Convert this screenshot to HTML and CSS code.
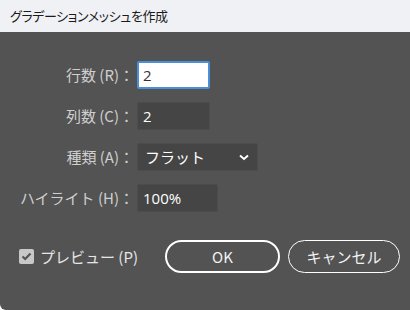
FILE: index.html
```html
<!DOCTYPE html>
<html lang="ja">
<head>
<meta charset="utf-8">
<link rel="stylesheet" href="styles.css">
</head>
<body>
<div class="dialog">
  <div class="titlebar">グラデーションメッシュを作成</div>
  <div class="content">
    <div class="form">
      <label class="lbl">行数 (R)：</label>
      <div class="field"><div class="input active w73">2</div></div>
      <label class="lbl">列数 (C)：</label>
      <div class="field"><div class="input w73">2</div></div>
      <label class="lbl">種類 (A)：</label>
      <div class="field"><div class="input select w121"><span>フラット</span>
        <svg width="10" height="7" viewBox="0 0 10 7"><path d="M1 1.5 L5 5 L9 1.5" fill="none" stroke="#fff" stroke-width="2"/></svg></div></div>
      <label class="lbl">ハイライト (H)：</label>
      <div class="field"><div class="input w81">100%</div></div>
    </div>
    <div class="footer">
      <div class="check">
        <span class="box"><svg width="11" height="9" viewBox="0 0 11 9"><path d="M1.5 4.5 L4.2 7 L9.5 1.5" fill="none" stroke="#555" stroke-width="2.2"/></svg></span>
        <span class="checklbl">プレビュー (P)</span>
      </div>
      <div class="buttons">
        <button class="btn ok">OK</button>
        <button class="btn cancel">キャンセル</button>
      </div>
    </div>
  </div>
</div>
</body>
</html>
```
FILE: styles.css
```css
html, body {
  margin: 0;
  padding: 0;
  background: #ffffff;
}
body {
  width: 410px;
  height: 310px;
  overflow: hidden;
  font-family: "Noto Sans CJK JP", "Noto Sans", sans-serif;
}
.dialog {
  width: 410px;
  height: 310px;
  background: #535353;
  border-bottom-left-radius: 6px;
  overflow: hidden;
  display: flex;
  flex-direction: column;
}
.titlebar {
  height: 32px;
  background: #f0f1f5;
  color: #1b1b1b;
  font-size: 13px;
  letter-spacing: -0.4px;
  font-feature-settings: "palt";
  line-height: 32px;
  padding-left: 10px;
  box-sizing: border-box;
}
.content {
  padding-top: 29px;
}
.form {
  display: grid;
  grid-template-columns: 134px auto;
  column-gap: 3px;
  row-gap: 13px;
  align-items: center;
}
.lbl {
  text-align: right;
  color: #cfcfcf;
  font-size: 15px;
  line-height: 28px;
  white-space: nowrap;
}
.field {
  display: flex;
}
.input {
  height: 28px;
  box-sizing: border-box;
  background: #454545;
  border: 1px solid #4c4c4c;
  border-radius: 2px;
  color: #ffffff;
  font-family: "Open Sans", "Noto Sans CJK JP", sans-serif;
  font-size: 15px;
  line-height: 26px;
  padding-left: 5px;
}
.input.active {
  background: #ffffff;
  border: 2px solid #4a90d9;
  color: #333333;
  line-height: 24px;
  padding-left: 4px;
}
.w73 { width: 73px; }
.w81 { width: 81px; }
.w121 { width: 121px; }
.select {
  display: flex;
  align-items: center;
  justify-content: space-between;
  padding-right: 8px;
  font-family: "Noto Sans CJK JP", sans-serif;
  font-size: 15px;
  padding-left: 7px;
}
.footer {
  margin-top: 28px;
  display: flex;
  align-items: center;
  padding-left: 19px;
  padding-right: 10px;
}
.check {
  display: flex;
  align-items: center;
  gap: 6px;
}
.box {
  width: 15px;
  height: 15px;
  background: #c8c8c8;
  border-radius: 2px;
  display: flex;
  align-items: center;
  justify-content: center;
}
.checklbl {
  color: #e6e6e6;
  font-size: 15px;
}
.buttons {
  display: flex;
  gap: 8px;
  margin-left: auto;
}
.btn {
  height: 33px;
  box-sizing: border-box;
  background: transparent;
  border: 2px solid #ffffff;
  border-radius: 17px;
  color: #f2f2f2;
  font-family: "Noto Sans CJK JP", "Noto Sans", sans-serif;
  font-size: 15px;
  padding: 0;
}
.ok { width: 115px; }
.cancel { width: 112px; border-width: 1.5px; }
```
